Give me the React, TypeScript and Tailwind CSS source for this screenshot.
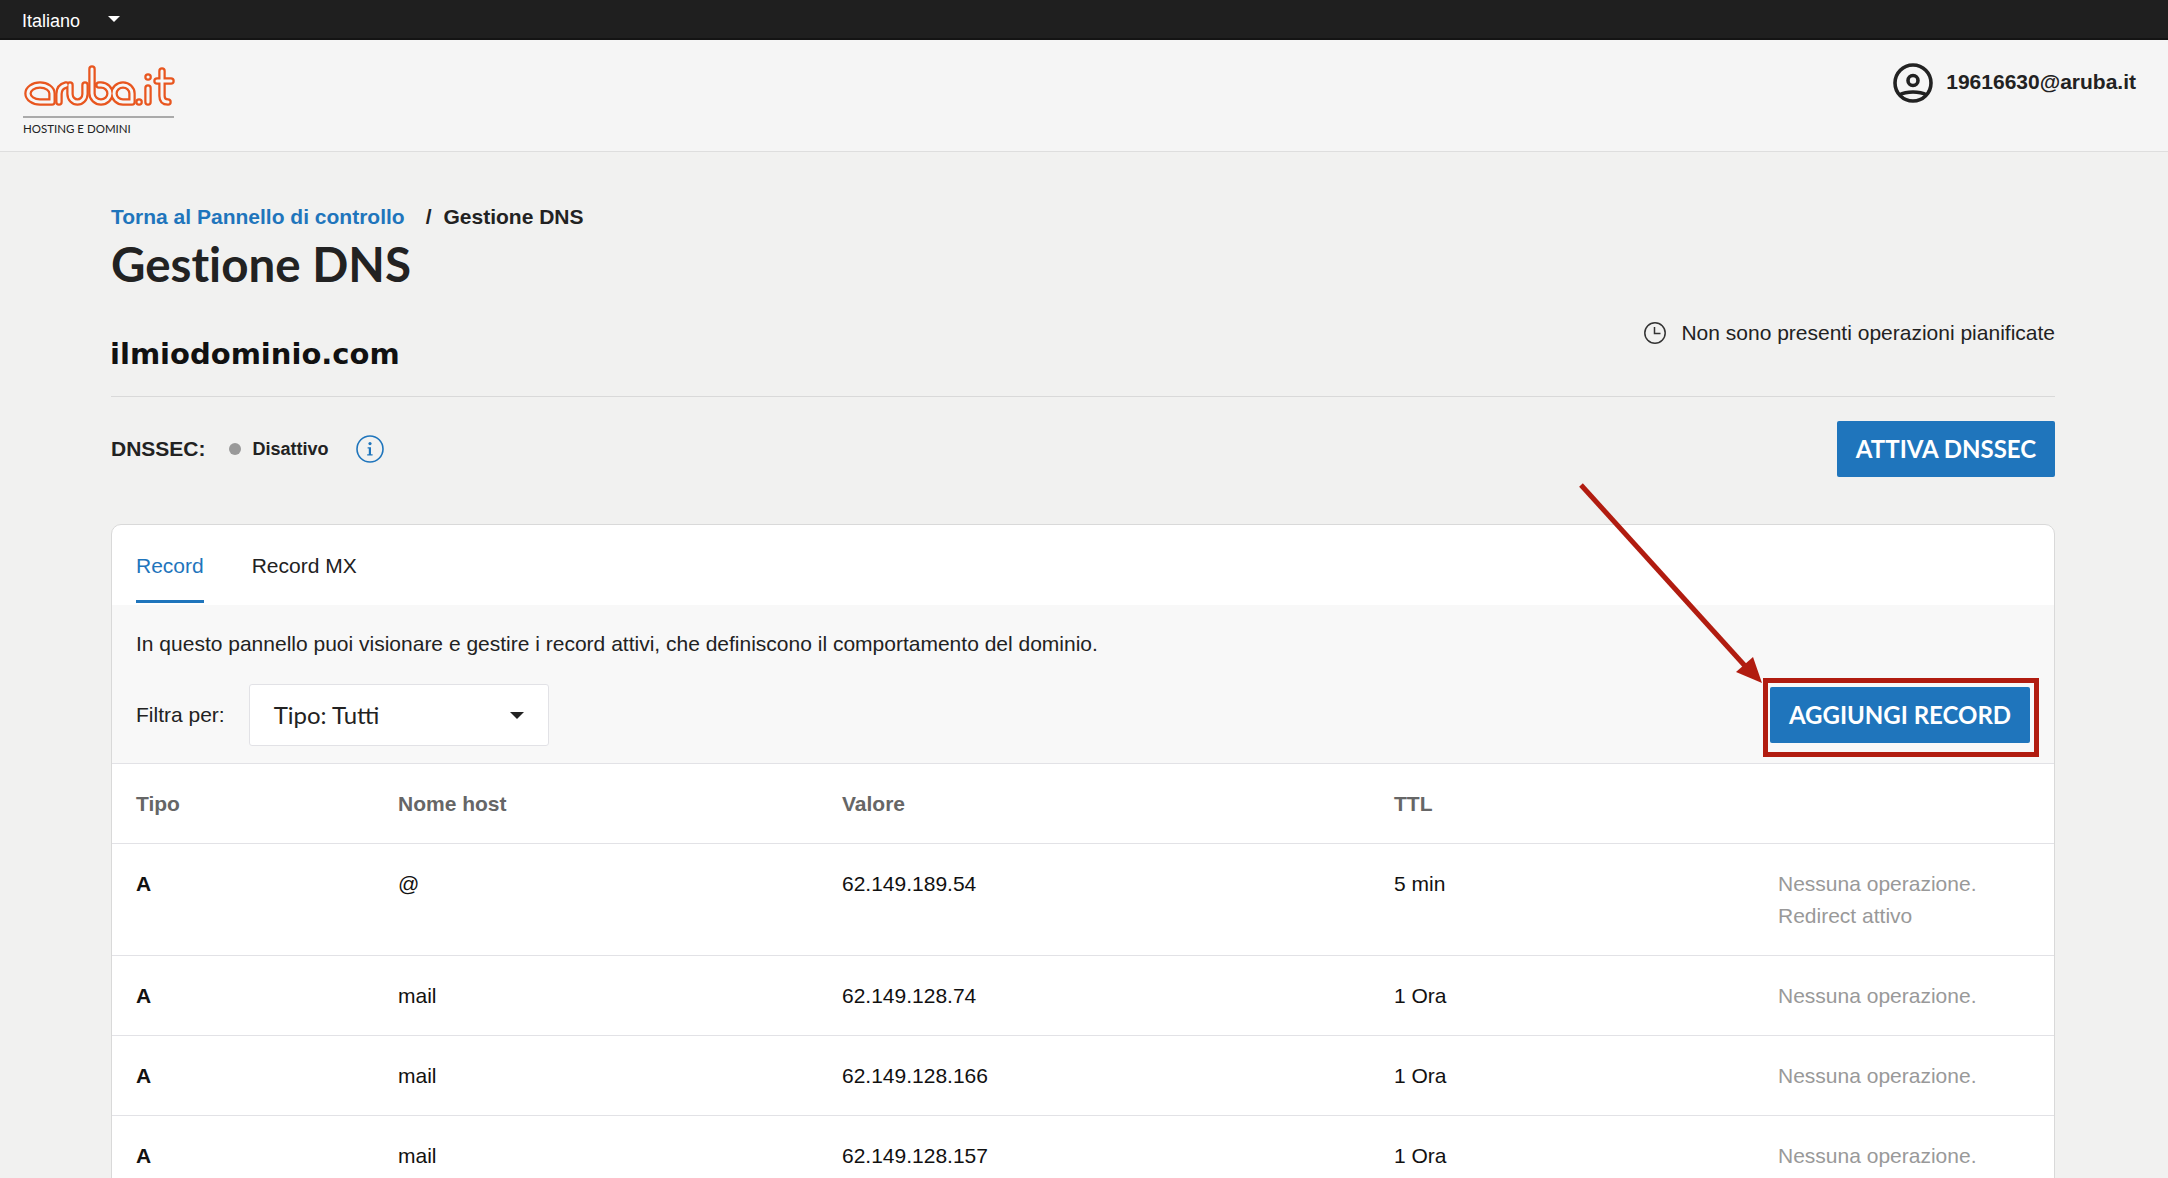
const sans = "font-['Liberation_Sans',Arial,sans-serif]"

const rows = [
  { type: "A", host: "@", value: "62.149.189.54", ttl: "5 min", redirect: true },
  { type: "A", host: "mail", value: "62.149.128.74", ttl: "1 Ora", redirect: false },
  { type: "A", host: "mail", value: "62.149.128.166", ttl: "1 Ora", redirect: false },
  { type: "A", host: "mail", value: "62.149.128.157", ttl: "1 Ora", redirect: false },
]

const Logo = () => (
  <svg width="152" height="46" viewBox="0 0 152 46" fill="none" strokeLinecap="round" strokeLinejoin="round">
    {[
      { color: "#e8561f", width: 7.5 },
      { color: "#f7f7f7", width: 3 },
    ].map((s) => (
      <g key={s.color} stroke={s.color} strokeWidth={s.width}>
        <path d="M29 38V29.5a12 8.5 0 1 0-12 8.5h12" />
        <path d="M36 38V30c0-5 3-8 7-9" />
        <path d="M47 21v9a7.5 8 0 0 0 15 0v-9" />
        <path d="M69 5v24.5a9 8.5 0 1 0 9-8.5h-2" />
        <path d="M109 38V29.5a9 8.5 0 1 0-9 8.5h9" />
        <path d="M116 38h.1" />
        <path d="M125 24v14" />
        <path d="M125 13h.1" />
        <path d="M139 7v25c0 4 2 6 6 6" />
        <path d="M134 17h14" />
      </g>
    ))}
  </svg>
)

const UserIcon = () => (
  <svg width="42" height="42" viewBox="0 0 42 42" fill="none" stroke="#222" strokeWidth="3.6">
    <circle cx="21" cy="21" r="18" />
    <circle cx="21" cy="18.5" r="5" />
    <path d="M7 33c4-2 9-3 14-3s10 1 14 3" />
  </svg>
)

const ClockIcon = () => (
  <svg width="24" height="24" viewBox="0 0 24 24" fill="none" stroke="#333" strokeWidth="1.5">
    <circle cx="12" cy="12" r="10.2" />
    <path d="M11.5 6v6.5h6" />
  </svg>
)

const InfoIcon = () => (
  <svg width="28" height="28" viewBox="0 0 28 28" fill="none">
    <circle cx="14" cy="14" r="13" stroke="#1f75bc" strokeWidth="1.6" />
    <circle cx="14" cy="8.6" r="1.6" fill="#1f75bc" />
    <path d="M11.6 12.2h3.4v7h1.6v1.4h-5.4v-1.4h1.6v-5.6h-1.2z" fill="#1f75bc" />
  </svg>
)

const Caret = ({ className }: { className: string }) => (
  <span className={`block h-0 w-0 border-x-transparent border-b-0 ${className}`} />
)

const App = () => {
  return (
    <div className={`relative h-[1178px] overflow-hidden bg-[#f1f1f0] text-[21px] text-[#222] ${sans}`}>
      <div className="flex h-10 items-center gap-[28px] border-b-2 border-[#141414] bg-[#1f1f1f] pl-[22px] text-[18px] text-white">
        <span className="pt-[5px]">Italiano</span>
        <Caret className="border-x-[6px] border-t-[6px] border-t-white" />
      </div>

      <header className="flex h-[112px] justify-between border-b border-[#dedede] bg-[#f5f5f5] pl-[23px] pr-8">
        <div className="pt-[24px]">
          <Logo />
          <div className="mt-[6px] w-[151px] border-t-2 border-[#aaa] pt-[3px] font-['Lato',sans-serif] text-[11.5px] leading-[16px] text-[#222]">
            HOSTING E DOMINI
          </div>
        </div>
        <div className="flex items-start gap-[12px] pt-[22px]">
          <UserIcon />
          <span className="pt-[8px] font-bold leading-[23px]">19616630@aruba.it</span>
        </div>
      </header>

      <main className="pl-[111px] pr-[113px] pt-[53px]">
        <div className="flex items-center font-bold leading-6">
          <a className="text-[#1f75bc]">Torna al Pannello di controllo</a>
          <span className="ml-[21px]">/</span>
          <span className="ml-[12px]">Gestione DNS</span>
        </div>
        <h1 className="mt-[6px] font-['Lato',sans-serif] text-[47.5px] font-bold leading-[58px] [font-variant-ligatures:none]">
          Gestione DNS
        </h1>

        <div className="mt-[18px] flex justify-between border-b border-[#d9d9d9] pb-[15px]">
          <h2 className="-ml-px pt-[17px] font-['DejaVu_Sans',sans-serif] text-[29px] font-bold leading-[53px] text-[#111]">
            ilmiodominio.com
          </h2>
          <div className="mt-[7px] flex h-[30px] items-center gap-[14px]">
            <ClockIcon />
            <span>Non sono presenti operazioni pianificate</span>
          </div>
        </div>

        <div className="mt-6 flex h-14 items-center justify-between">
          <div className="flex items-center">
            <span className="font-bold">DNSSEC:</span>
            <span className="ml-[23px] h-3 w-3 rounded-full bg-[#999]" />
            <span className="ml-[12px] text-[18px] font-bold">Disattivo</span>
            <span className="ml-[27px]"><InfoIcon /></span>
          </div>
          <button className="flex h-14 w-[218px] items-center justify-center rounded-[2px] bg-[#1f75bc] font-['Lato',sans-serif] text-[24px] font-bold text-white">
            ATTIVA DNSSEC
          </button>
        </div>

        <section className="mt-[47px] overflow-hidden rounded-t-[10px] border border-[#d9d9d9] bg-white">
          <div className="flex h-[80px] gap-[48px] px-6">
            <div className="h-[78px] border-b-[3px] border-[#1f75bc] pt-[29px] leading-6 text-[#1f75bc]">Record</div>
            <div className="pt-[29px] leading-6">Record MX</div>
          </div>

          <div className="h-[158px] bg-[#f8f8f8] px-6 pt-[27px]">
            <p className="leading-6">
              In questo pannello puoi visionare e gestire i record attivi, che definiscono il comportamento del dominio.
            </p>
            <div className="mt-[28px] flex items-center justify-between">
              <div className="flex items-center gap-[24px]">
                <span>Filtra per:</span>
                <div className="flex h-[62px] w-[300px] items-center justify-between rounded-[3px] border border-[#e2e2e6] bg-white pl-[24px] pr-[24px] font-['Lato',sans-serif] text-[24px]">
                  <span>Tipo: Tutti</span>
                  <Caret className="border-x-[7px] border-t-[7px] border-t-[#222]" />
                </div>
              </div>
              <button className="flex h-14 w-[260px] items-center justify-center rounded-[2px] bg-[#1f75bc] font-['Lato',sans-serif] text-[24px] font-bold text-white">
                AGGIUNGI RECORD
              </button>
            </div>
          </div>

          <div className="grid h-[80px] grid-cols-[262px_444px_552px_384px_1fr] items-center border-t border-[#e2e2e6] pl-6 font-bold text-[#666]">
            <span>Tipo</span>
            <span>Nome host</span>
            <span>Valore</span>
            <span>TTL</span>
          </div>

          {rows.map((row) => (
            <div
              key={row.value}
              className="grid grid-cols-[262px_444px_552px_384px_1fr] border-t border-[#e2e2e6] pb-[23px] pl-6 pt-6 leading-8 text-[#111]"
            >
              <span className="font-bold">{row.type}</span>
              <span>{row.host}</span>
              <span>{row.value}</span>
              <span>{row.ttl}</span>
              <span className="text-[#999]">
                Nessuna operazione.
                {row.redirect && <><br />Redirect attivo</>}
              </span>
            </div>
          ))}
        </section>
      </main>

      {/* annotation drawn on top of the screenshot */}
      <svg className="pointer-events-none absolute left-0 top-0" width="2168" height="1178" fill="none">
        <path d="M1581 485L1746 667" stroke="#b11c10" strokeWidth="5" />
        <path d="M1762 683L1736 672L1753 657Z" fill="#b11c10" />
      </svg>
      <div className="pointer-events-none absolute left-[1763px] top-[678px] h-[79px] w-[276px] border-[5px] border-[#b11c10]" />
    </div>
  )
}

export default App
